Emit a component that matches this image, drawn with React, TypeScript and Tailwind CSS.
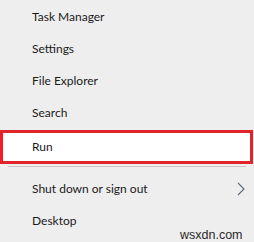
import React from 'react';

const items = ['Task Manager', 'Settings', 'File Explorer', 'Search'];

const ChevronRight: React.FC = () => (
  <svg width="8" height="14" viewBox="0 0 8 14" fill="none" className="mr-[9px]">
    <polyline points="1,1 7,7 1,13" stroke="#5c6b7c" strokeWidth="1.1" />
  </svg>
);

export default function App() {
  return (
    <div
      className="relative w-[254px] h-[242px] bg-[#eeeeee] text-[#1a1a1a] text-[12px] overflow-hidden"
      style={{ fontFamily: 'Lato, "Open Sans", sans-serif' }}
    >
      <div className="pt-px">
        {items.map((label) => (
          <div key={label} className="h-8 flex items-center pl-8">
            {label}
          </div>
        ))}
      </div>

      {/* highlighted row */}
      <div className="mt-px mr-px h-[34px] border-[3px] border-[#e0242b] bg-white flex items-center pl-[29px]">
        Run
      </div>

      <div className="mt-[2px] mx-2 h-px bg-[#d2c4c4]" />

      <div className="mt-[6px]">
        <div className="h-8 flex items-center justify-between pl-8">
          <span>Shut down or sign out</span>
          <ChevronRight />
        </div>
        <div className="h-8 flex items-center pl-8">Desktop</div>
      </div>

      <div
        className="absolute left-[180px] top-[226px] text-[12.5px] text-[#2a2a2a]"
        style={{ fontFamily: '"Liberation Sans", Arial, sans-serif' }}
      >
        wsxdn.com
      </div>
    </div>
  );
}
